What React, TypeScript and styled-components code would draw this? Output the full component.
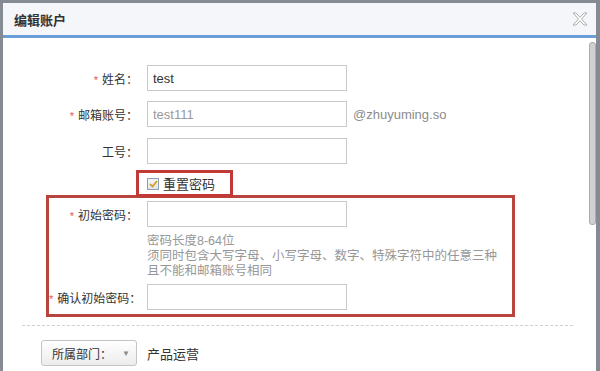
import styled, { createGlobalStyle } from 'styled-components';

const GlobalStyle = createGlobalStyle`
  html, body {
    margin: 0;
    padding: 0;
    background: #8b8f96;
  }
  body {
    font-family: "Liberation Sans", "Noto Sans CJK SC", sans-serif;
  }
`;

const Page = styled.div`
  display: flex;
  width: 600px;
  height: 371px;
  overflow: hidden;
  background: #868a92;
  padding: 3px 4px 0 3px;
  box-sizing: border-box;
`;

const Dialog = styled.div`
  display: flex;
  flex-direction: column;
  flex: 1;
  background: #fff;
`;

const Header = styled.div`
  display: flex;
  align-items: center;
  justify-content: space-between;
  height: 32px;
  padding: 0 8px 0 11px;
  background: #f4f6f9;
  border-bottom: 3px solid #6a9fd8;
`;

const Title = styled.div`
  font-size: 13px;
  font-weight: bold;
  color: #333;
`;

const Body = styled.div`
  display: flex;
  flex: 1;
  min-height: 0;
`;

const Content = styled.div`
  flex: 1;
  padding: 27px 0 0 46px;
`;

const Track = styled.div`
  width: 7px;
  padding-top: 4px;
`;

const Thumb = styled.div`
  height: 183px;
  background: #cfd0d3;
  border: 1px solid #a9abb0;
  border-radius: 3px;
  box-sizing: border-box;
`;

const Row = styled.div<{ $gap?: number }>`
  display: flex;
  align-items: center;
  margin-bottom: ${(p) => p.$gap ?? 10}px;
`;

const Label = styled.div`
  width: 89px;
  margin-right: 9px;
  text-align: right;
  font-size: 12px;
  color: #333;
  white-space: nowrap;
`;

const Star = styled.span`
  color: #e0574f;
  font-size: 11px;
  margin-right: 4px;
`;

const Input = styled.div<{ $muted?: boolean }>`
  width: 200px;
  height: 26px;
  box-sizing: border-box;
  border: 1px solid #c9c9c9;
  padding: 0 5px;
  display: flex;
  align-items: center;
  font-size: 13px;
  color: ${(p) => (p.$muted ? '#999' : '#333')};
`;

const Suffix = styled.span`
  margin-left: 6px;
  font-size: 13px;
  color: #8c8c8c;
`;

const Mark = styled.div`
  display: inline-flex;
  align-items: center;
  margin-left: 87px;
  width: 97px;
  height: 27px;
  box-sizing: border-box;
  border: 3px solid #c23a35;
  padding-left: 8px;
  gap: 4px;
  font-size: 13px;
  color: #333;
`;

const Check = styled.span`
  display: inline-flex;
  align-items: center;
  justify-content: center;
  width: 12px;
  height: 12px;
  box-sizing: border-box;
  border: 1px solid #8f9fb5;
  background: linear-gradient(#f2f4f7, #dfe4ea);
`;

const MarkGroup = styled.div`
  margin: -2px 0 0 -3px;
  width: 469px;
  box-sizing: border-box;
  border: 3px solid #b9443d;
  padding: 3px 0 4px;
`;

const Help = styled.div`
  margin: 7px 0 5px 98px;
  font-size: 12.5px;
  line-height: 15px;
  color: #979797;
`;

const Divider = styled.div`
  margin: 8px 16px 0 -27px;
  border-top: 1px dashed #d0d0d0;
`;

const Footer = styled.div`
  display: flex;
  align-items: center;
  gap: 10px;
  margin: 14px 0 0 -8px;
`;

const Select = styled.div`
  display: flex;
  align-items: center;
  width: 96px;
  height: 26px;
  box-sizing: border-box;
  padding-left: 10px;
  border: 1px solid #c4c4c4;
  border-radius: 3px;
  background: linear-gradient(#ffffff, #ececec);
  font-size: 12px;
  color: #333;
`;

const Caret = styled.span`
  margin-left: 10px;
  font-size: 8px;
  color: #8a8a8a;
`;

const Dept = styled.span`
  font-size: 13px;
  color: #333;
`;

const CloseIcon = () => (
  <svg width="16" height="14" viewBox="0 0 16 14">
    <path
      d="M1 1h3l4 4.2L12 1h3l-5.5 6L15 13h-3l-4-4.2L4 13H1l5.5-6z"
      fill="#fff"
      stroke="#a3a3a3"
      strokeWidth="0.9"
    />
  </svg>
);

const Tick = () => (
  <svg width="9" height="8" viewBox="0 0 9 8">
    <path d="M1 4l2.5 2.5L8 1" fill="none" stroke="#d19a1b" strokeWidth="1.6" />
  </svg>
);

const App = () => {
  return (
    <>
      <GlobalStyle />
      <Page>
        <Dialog>
          <Header>
            <Title>编辑账户</Title>
            <CloseIcon />
          </Header>
          <Body>
            <Content>
              <Row>
                <Label>
                  <Star>*</Star>姓名：
                </Label>
                <Input>test</Input>
              </Row>
              <Row $gap={11}>
                <Label>
                  <Star>*</Star>邮箱账号：
                </Label>
                <Input $muted>test111</Input>
                <Suffix>@zhuyuming.so</Suffix>
              </Row>
              <Row $gap={6}>
                <Label>工号：</Label>
                <Input />
              </Row>
              <Mark>
                <Check>
                  <Tick />
                </Check>
                重置密码
              </Mark>
              <MarkGroup>
                <Row $gap={0}>
                  <Label>
                    <Star>*</Star>初始密码：
                  </Label>
                  <Input />
                </Row>
                <Help>
                  密码长度8-64位
                  <br />
                  须同时包含大写字母、小写字母、数字、特殊字符中的任意三种
                  <br />
                  且不能和邮箱账号相同
                </Help>
                <Row $gap={0}>
                  <Label>
                    <Star>*</Star>确认初始密码：
                  </Label>
                  <Input />
                </Row>
              </MarkGroup>
              <Divider />
              <Footer>
                <Select>
                  所属部门：<Caret>▼</Caret>
                </Select>
                <Dept>产品运营</Dept>
              </Footer>
            </Content>
            <Track>
              <Thumb />
            </Track>
          </Body>
        </Dialog>
      </Page>
    </>
  );
};

export default App;
